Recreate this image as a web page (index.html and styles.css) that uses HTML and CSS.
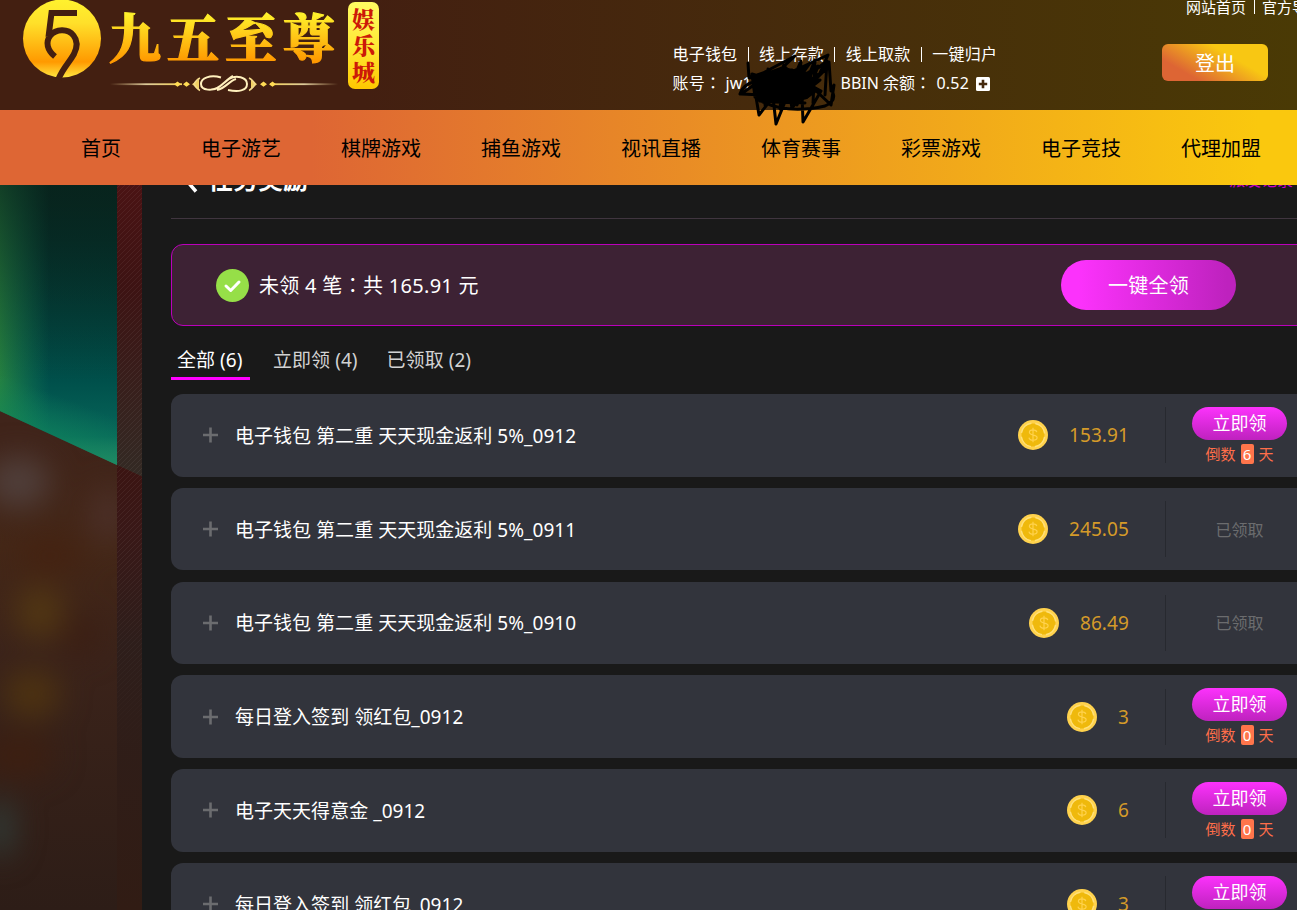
FILE: index.html
```html
<!DOCTYPE html>
<html lang="zh-CN">
<head>
<meta charset="utf-8">
<title>九五至尊</title>
<link rel="stylesheet" href="styles.css">
</head>
<body>
<svg class="defs" width="0" height="0">
  <defs>
    <linearGradient id="gold" x1="0" y1="0" x2="0" y2="1">
      <stop offset="0" stop-color="#fff22e"/><stop offset=".3" stop-color="#ffe02a"/><stop offset=".8" stop-color="#ff9900"/><stop offset="1" stop-color="#ffe640"/>
    </linearGradient>
    <linearGradient id="goldText" x1="0" y1="0" x2="0" y2="1">
      <stop offset=".2" stop-color="#fff32c"/><stop offset=".85" stop-color="#ff9800"/>
    </linearGradient>
    <linearGradient id="fadeIn"><stop offset="0" stop-color="#d9bd85" stop-opacity="0"/><stop offset=".5" stop-color="#dcc999"/><stop offset="1" stop-color="#f5d35a"/></linearGradient>
    <linearGradient id="fadeOut"><stop offset="0" stop-color="#f5d35a"/><stop offset=".5" stop-color="#dcc999"/><stop offset="1" stop-color="#d9bd85" stop-opacity="0"/></linearGradient>
    <linearGradient id="plaque" x1="0" y1="0" x2="0" y2="1">
      <stop offset="0" stop-color="#fffb62"/><stop offset=".5" stop-color="#ffe836"/><stop offset="1" stop-color="#ffc800"/>
    </linearGradient>
    <symbol id="coin" viewBox="0 0 30 30">
      <circle cx="15" cy="15" r="15" fill="#ffd24d"/>
      <circle cx="15" cy="15" r="11.500" fill="#efb90c"/>
      <circle cx="15" cy="15" r="11.800" fill="none" stroke="#ffe07a" stroke-width="1.500" stroke-dasharray="14.500 4.030" stroke-dashoffset="-2"/>
      <path d="M18.800 12.200c-.3-1.500-1.700-2.300-3.700-2.300-2.200 0-3.700.9-3.700 2.400 0 3.700 7.700 1.800 7.700 5.300 0 1.700-1.600 2.600-4 2.600-2.400 0-3.900-.9-4.100-2.600M15 7.700v14.600" fill="none" stroke="#ffd24d" stroke-width="1.200"/>
    </symbol>
    <symbol id="plus" viewBox="0 0 16 16"><path d="M8.500 .5v15M1 8h15" fill="none" stroke="#6b6c6f" stroke-width="2.600"/></symbol>
  </defs>
</svg>

<header class="header">
  <svg class="logo" width="400" height="110" viewBox="0 0 400 110">
    <circle cx="62" cy="38.500" r="39" fill="url(#gold)"/>
    <path d="M77 13H51.500L48.500 37M55 56.500C47 50 45.500 42 50 36C56 28.500 68 28.500 73.500 35.500C78 41 77 48 74 54C69 63 63 68 58.500 79" fill="none" stroke="#431f11" stroke-width="6"/>
    <text class="logo-name" x="109" y="58">九五至尊</text>
    <g fill="none">
      <rect x="110" y="83.300" width="72" height="1.800" fill="url(#fadeIn)"/>
      <rect x="270" y="83.300" width="68" height="1.800" fill="url(#fadeOut)"/>
      <path d="M174 84.200l3.500-2.600 3.500 2.600-3.500 2.600zM183 84.200l3.500-2.600 3.500 2.600-3.500 2.600zM260 84.200l3.500-2.600 3.500 2.600-3.500 2.600zM269 84.200l3.500-2.600 3.500 2.600-3.500 2.600z" fill="#ffdc55"/>
      <path d="M192 84.200L199 79V89.500ZM257 84.200L251 79V89.500Z" fill="#f0cf62"/>
      <path d="M200 78q-3.500 1.500-6 6.200 2.500 4.700 6 6.200M249 78q3.500 1.500 6 6.200-2.500 4.700-6 6.200" stroke="#f3d98a" stroke-width="1.600"/>
      <path d="M221 77.500C210 74.500 201 78 201 84C201 91 213 91 219 87L229 79C236 74.500 247 77 247 84C247 91 238 92 228 90M211 89.500C220 90 225 80 233 76M217 90C226 88 229 81 236 79" stroke="#fff0bd" stroke-width="2"/>
    </g>
    <rect x="348" y="2" width="31" height="87" rx="7" fill="url(#plaque)"/>
    <g class="plaque-text"><text x="352" y="28">娱</text><text x="352" y="54">乐</text><text x="352" y="81">城</text></g>
  </svg>
  <div class="account">
    <div class="line links"><span>电子钱包</span><i></i><span>线上存款</span><i></i><span>线上取款</span><i></i><span>一键归户</span></div>
    <div class="line"><span class="user">账号<em lang="zh-TW">：</em> jw1</span><span class="balance">BBIN 余额<em lang="zh-TW">：</em></span><span class="amount">0.52</span>
      <svg class="add" width="14" height="14" viewBox="0 0 14 14"><rect width="14" height="14" rx="1.500" fill="#fff"/><path d="M7 2.800v8.400M2.800 7h8.400" stroke="#44290e" stroke-width="2.600"/></svg>
    </div>
    <svg class="scribble" width="105" height="85" viewBox="0 0 105 85">
      <path d="M13 18L14 33L28 28L60 11L30 39L93 10L84 30L94 17L96 46L99 40L96 60L75 40L86 46L68 77L67 50L57 63L54 47L41 79L38 52L24 70L19 40L6 49L28 50L18 35L40 30L22 45L57 25L35 55L75 18L48 55L92 23L60 55L85 35L40 44L25 56L70 58L20 52L17 29L55 40L83 21L72 52L20 33L50 22L65 37L92 16L90 50M33 24L30 60L49 20L45 64L66 16L62 60L80 15L78 58M5 49Q8 39 22 36M22 54Q50 70 90 61Q101 56 98 48" fill="none" stroke="#000" stroke-width="3" stroke-linejoin="round" stroke-linecap="round"/>
      <path d="M15 30L40 26L53 23L68 26L78 28L75 40L83 46L72 54L53 59L34 58L22 50Z" fill="#000"/>
    </svg>
  </div>
  <div class="site"><div class="site-links"><span>网站首页</span><i></i><span>官方导航</span></div><a class="logout">登出</a></div>
</header>

<nav class="nav"><a>首页</a><a>电子游艺</a><a>棋牌游戏</a><a>捕鱼游戏</a><a>视讯直播</a><a>体育赛事</a><a>彩票游戏</a><a>电子竞技</a><a>代理加盟</a></nav>

<main class="main">
  <aside class="scene">
    <svg width="142" height="725" viewBox="0 185 142 725">
      <defs>
        <linearGradient id="teal" x1="0" y1="0" x2="0" y2="1"><stop offset="0" stop-color="#03231f"/><stop offset=".7" stop-color="#00504b"/><stop offset=".9" stop-color="#07665a"/><stop offset="1" stop-color="#328a6e"/></linearGradient>
        <linearGradient id="green" x1="0" y1="0" x2="1" y2="0"><stop offset="0" stop-color="#278340" stop-opacity=".95"/><stop offset=".42" stop-color="#148055" stop-opacity="0"/></linearGradient>
        <linearGradient id="shade" x1="0" y1="0" x2="0" y2="1"><stop offset="0" stop-color="#0a241c" stop-opacity=".7"/><stop offset=".7" stop-color="#0a241c" stop-opacity="0"/></linearGradient>
        <linearGradient id="glow" gradientUnits="userSpaceOnUse" x1="70" y1="400" x2="55" y2="440"><stop offset="0" stop-color="#118a5c" stop-opacity="0"/><stop offset="1" stop-color="#118a5c" stop-opacity=".6"/></linearGradient>
        <linearGradient id="wood" x1="0" y1="0" x2="0" y2="1"><stop offset="0" stop-color="#40251b"/><stop offset=".35" stop-color="#40241a"/><stop offset=".5" stop-color="#442717"/><stop offset=".65" stop-color="#3b231a"/><stop offset="1" stop-color="#2d1d17"/></linearGradient>
        <linearGradient id="curtain" x1="0" y1="0" x2="0" y2="1"><stop offset="0" stop-color="#4a1314"/><stop offset=".35" stop-color="#3d1313"/><stop offset="1" stop-color="#332a24"/></linearGradient>
        <linearGradient id="curtainLow" x1="0" y1="0" x2="0" y2="1"><stop offset="0" stop-color="#3b1412"/><stop offset=".15" stop-color="#391817"/><stop offset=".4" stop-color="#2e1e1b"/><stop offset="1" stop-color="#311c14"/></linearGradient>
        <pattern id="hatch" width="5" height="5" patternUnits="userSpaceOnUse"><path d="M-1 6L6-1" stroke="#fff" stroke-opacity=".06"/></pattern>
        <linearGradient id="hatchFade" x1="0" y1="0" x2="0" y2="1"><stop offset=".5" stop-color="#fff"/><stop offset=".8" stop-color="#000"/></linearGradient>
        <mask id="hatchMask"><rect x="117" y="185" width="25" height="725" fill="url(#hatchFade)"/></mask>
        <filter id="soft" filterUnits="userSpaceOnUse" x="-100" y="350" width="350" height="650" color-interpolation-filters="sRGB"><feGaussianBlur stdDeviation="15"/></filter>
      </defs>
      <rect y="185" width="142" height="725" fill="url(#wood)"/>
      <g filter="url(#soft)">
        <ellipse cx="18" cy="482" rx="32" ry="26" fill="#503f3b"/>
        <ellipse cx="108" cy="515" rx="18" ry="28" fill="#4c3029"/>
        <ellipse cx="50" cy="555" rx="32" ry="18" fill="#442211"/>
        <ellipse cx="40" cy="612" rx="24" ry="26" fill="#523713"/>
        <ellipse cx="32" cy="694" rx="28" ry="24" fill="#4e3311"/>
        <ellipse cx="80" cy="635" rx="18" ry="20" fill="#3b1e13"/>
        <ellipse cx="18" cy="755" rx="36" ry="22" fill="#3d1f11"/>
        <ellipse cx="0" cy="828" rx="14" ry="30" fill="#303c38"/>
      </g>
      <path d="M0 185H117V465L0 411Z" fill="url(#teal)"/>
      <path d="M0 185H117V465L0 411Z" fill="url(#green)"/>
      <path d="M0 185H117V465L0 411Z" fill="url(#shade)"/>
      <path d="M0 185H117V465L0 411Z" fill="url(#glow)"/>
      <path d="M117 185H142V476.500L117 465Z" fill="url(#curtain)"/>
      <path d="M117 465L142 476.500V910H117Z" fill="url(#curtainLow)"/>
      <rect x="117" y="185" width="25" height="725" fill="url(#hatch)" mask="url(#hatchMask)"/>
    </svg>
  </aside>
  <section class="panel">
    <div class="title"><svg width="14" height="26" viewBox="0 0 14 26"><path d="M12 1.500L3 13l9 10.500" fill="none" stroke="#fff" stroke-width="3.500"/></svg><h1>任务奖励</h1><a>派发记录</a></div>
    <div class="summary">
      <svg width="33" height="33" viewBox="0 0 33 33"><circle cx="16.500" cy="16.500" r="16.500" fill="#96df48"/><path d="M10 17l4.700 4.500L23 13" fill="none" stroke="#fff" stroke-width="3" stroke-linecap="round" stroke-linejoin="round"/></svg>
      <span>未领 4 笔<em lang="zh-TW">：</em>共 165.91 元</span><a class="claim-all">一键全领</a>
    </div>
    <div class="tabs"><a class="active">全部 (6)</a><a>立即领 (4)</a><a>已领取 (2)</a></div>
    <ul class="tasks">
      <li><svg class="plus"><use href="#plus"/></svg><span class="name">电子钱包 第二重 天天现金返利 5%_0912</span><svg class="coin"><use href="#coin"/></svg><span class="money">153.91</span><div class="action"><a class="claim">立即领</a><span class="left">倒数<b>6</b>天</span></div></li>
      <li><svg class="plus"><use href="#plus"/></svg><span class="name">电子钱包 第二重 天天现金返利 5%_0911</span><svg class="coin"><use href="#coin"/></svg><span class="money">245.05</span><div class="action"><span class="done">已领取</span></div></li>
      <li><svg class="plus"><use href="#plus"/></svg><span class="name">电子钱包 第二重 天天现金返利 5%_0910</span><svg class="coin"><use href="#coin"/></svg><span class="money">86.49</span><div class="action"><span class="done">已领取</span></div></li>
      <li><svg class="plus"><use href="#plus"/></svg><span class="name">每日登入签到 领红包_0912</span><svg class="coin"><use href="#coin"/></svg><span class="money">3</span><div class="action"><a class="claim">立即领</a><span class="left">倒数<b>0</b>天</span></div></li>
      <li><svg class="plus"><use href="#plus"/></svg><span class="name">电子天天得意金 _0912</span><svg class="coin"><use href="#coin"/></svg><span class="money">6</span><div class="action"><a class="claim">立即领</a><span class="left">倒数<b>0</b>天</span></div></li>
      <li><svg class="plus"><use href="#plus"/></svg><span class="name">每日登入签到 领红包_0912</span><svg class="coin"><use href="#coin"/></svg><span class="money">3</span><div class="action"><a class="claim">立即领</a><span class="left">倒数<b>0</b>天</span></div></li>
    </ul>
  </section>
</main>
</body>
</html>
```
FILE: styles.css
```css
* { box-sizing: border-box; }
body { margin: 0; width: 1297px; height: 910px; overflow: hidden; background: #191919; color: #fff; font-family: "Noto Sans", "Noto Sans CJK SC", sans-serif; font-weight: 400; display: flex; flex-direction: column; white-space: nowrap; }
svg { flex: none; display: block; }
em { font-family: "Noto Sans CJK TC", sans-serif; font-style: normal; line-height: 1; }
.defs { position: absolute; }

.header { flex: none; height: 110px; display: flex; position: relative; z-index: 3; background: linear-gradient(90deg, #431f11 0, #431f11 28%, #4a3a05 100%); }
.logo-name { font: 900 52px "Noto Serif CJK SC", "Noto Sans CJK SC", sans-serif; letter-spacing: 6px; fill: url(#goldText); stroke: url(#goldText); stroke-width: 1.2px; }
.plaque-text { font: 900 23px "Noto Serif CJK SC", "Noto Sans CJK SC", sans-serif; fill: #cc1908; }
.account { position: relative; margin-left: 272.500px; width: 330.500px; padding-top: 40px; font-size: 16px; }
.line { height: 29px; display: flex; align-items: center; line-height: 29px; }
.links span { width: 65px; letter-spacing: .2px; }
.links i { width: 1px; height: 15px; margin: 0 10.300px; background: #fff; }
.user { width: 168px; letter-spacing: .2px; }
.balance { width: 96px; }
.amount { width: 38px; letter-spacing: .2px; }
.add { position: relative; margin-left: 1px; }
.scribble { position: absolute; left: 62.500px; top: 45px; }
.site { margin-left: 159px; width: 135px; }
.site-links { display: flex; align-items: center; height: 14px; margin-left: 24px; font-size: 15px; line-height: 14px; }
.site-links i { width: 1px; height: 14px; margin: 0 7.500px; background: #fff; flex: none; }
.logout { display: block; width: 106px; height: 37px; margin-top: 30px; border-radius: 6px; background: linear-gradient(30deg, #dd6534 22%, #f8c713 66%); font-size: 20px; line-height: 39px; text-align: center; }

.nav { flex: none; height: 75px; padding-left: 31px; display: flex; position: relative; z-index: 2; background: linear-gradient(90deg, #de6634 0, #de6634 24%, #fac80e 97%); color: #000; font-size: 20px; line-height: 77px; }
.nav a { flex: none; width: 140px; text-align: center; }

.main { height: 725px; display: flex; overflow: hidden; }
.scene { flex: none; width: 142px; }
.panel { flex: none; width: 1171px; padding-left: 29px; background: #191919; }
.title { display: flex; align-items: center; height: 67px; margin-top: -33px; padding: 0 15px; border-bottom: 1px solid #40353f; }
.title svg { margin: -9px 0 0 -2px; }
.title h1 { flex: 1; margin: -12px 0 0 10px; font-size: 25px; line-height: 36px; font-weight: 700; }
.title a { margin: -12px 5px 0 0; color: #c800c8; font-size: 16px; }
.summary { display: flex; align-items: center; height: 82px; margin-top: 25px; padding-left: 44px; border: 1px solid #bb00bb; border-radius: 12px; background: #3d2234; font-size: 20px; }
.summary span { width: 802px; margin-left: 10px; letter-spacing: .3px; line-height: 26px; margin-top: 1px; }
.claim-all { width: 175px; height: 50px; border-radius: 25px; background: linear-gradient(90deg, #fc32fc 10%, #be22be 95%); line-height: 52px; text-align: center; letter-spacing: .3px; }
.tabs { display: flex; height: 54px; color: #d2d2d2; font-size: 19px; line-height: 38px; margin-top: 15px; }
.tabs a { height: 39px; padding: 0 6px; margin-right: 17px; letter-spacing: .05px; }
.tabs .active { width: 79px; color: #fff; border-bottom: 3px solid #f0f; }
.tasks { list-style: none; margin: -1px 0 0; padding: 0; display: grid; gap: 11.250px; }
.tasks li { height: 82.500px; display: flex; align-items: center; padding-left: 31px; border-radius: 12px; background: #32343c; font-size: 19px; }
.plus { width: 16px; height: 16px; }
.name { flex: 1; margin: -1px 0 0 17px; letter-spacing: .03px; }
.coin { width: 30px; height: 30px; }
.money { margin-left: 21px; color: #d59b29; letter-spacing: .1px; }
.action { width: 148px; height: 56px; margin-left: 36px; border-left: 1px solid #27292f; display: flex; flex-direction: column; align-items: center; justify-content: center; }
.claim { width: 95px; height: 33px; border-radius: 17px; background: linear-gradient(#fc32fc, #be22be); font-size: 18px; line-height: 33px; text-align: center; }
.left { display: flex; align-items: center; height: 20px; margin-top: 3.500px; color: #ff6e4a; font-size: 15px; line-height: 20px; }
.left b { width: 13px; margin: 0 5px; border-radius: 2px; background: #ff754b; color: #fff; text-align: center; font-weight: 400; }
.done { color: #6b6c6e; font-size: 16px; margin-top: -1px; }
```
